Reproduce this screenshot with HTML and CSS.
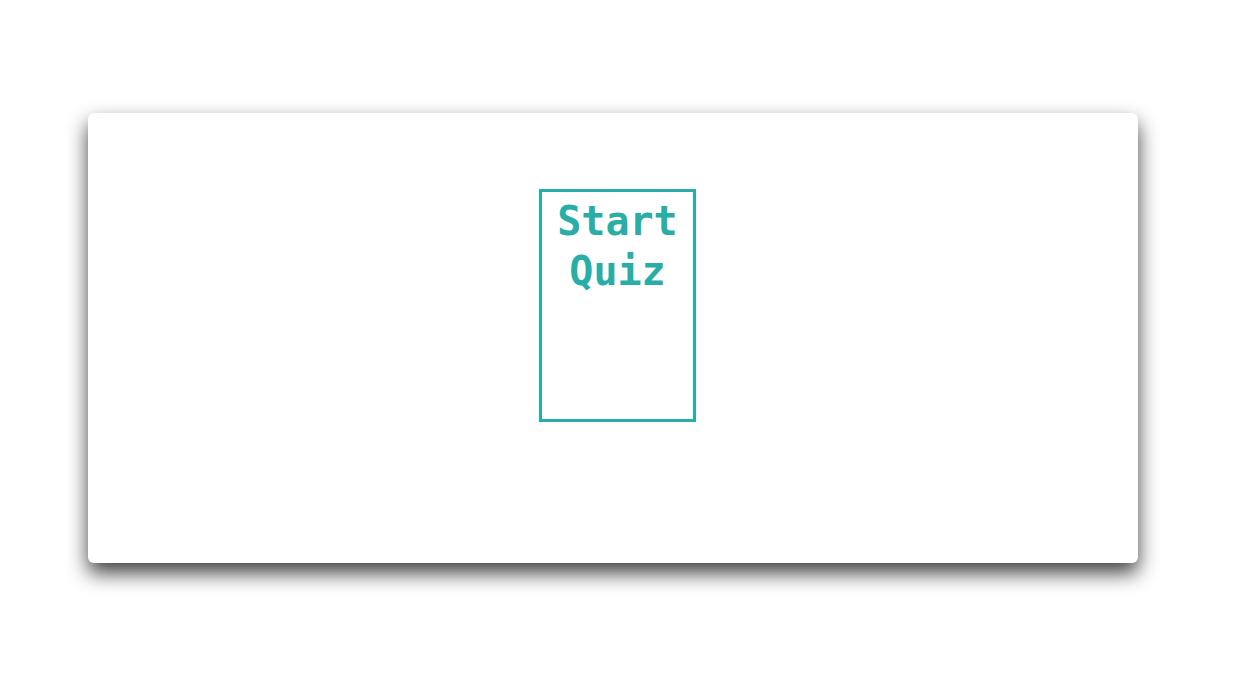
FILE: index.html
```html
<!DOCTYPE html>
<html>
<head>
<meta charset="utf-8">
<link rel="stylesheet" href="styles.css">
</head>
<body>
<div class="card">
  <button class="start">Start Quiz</button>
</div>
</body>
</html>
```
FILE: styles.css
```css
html, body { margin: 0; padding: 0; background: #fff; }
body { padding: 113px 0 0 88px; min-height: 100vh; box-sizing: border-box; }
.card {
  box-sizing: border-box;
  width: 1050px;
  height: 450px;
  background: #fff;
  border-radius: 6px;
  box-shadow: 0 10px 20px rgba(0,0,0,0.75);
  padding: 76px 0 0 451px;
}
.start {
  box-sizing: border-box;
  width: 157px;
  height: 233px;
  border: 3px solid #28aea6;
  background: #fff;
  color: #28aea6;
  font-family: "DejaVu Sans Mono", monospace;
  font-weight: bold;
  font-size: 40px;
  line-height: 50px;
  padding: 4px 0 0;
  display: flex;
  align-items: flex-start;
  justify-content: center;
  text-align: center;
}
```
